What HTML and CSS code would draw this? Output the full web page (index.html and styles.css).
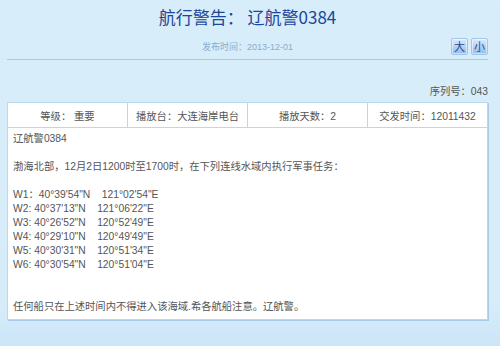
FILE: index.html
```html
<!DOCTYPE html>
<html lang="zh-CN">
<head>
    <meta charset="UTF-8">
    <title>航行警告： 辽航警0384</title>
    <link rel="stylesheet" href="styles.css">
</head>
<body>
    <div class="page">
        <h1 class="title">航行警告： 辽航警0384</h1>
        <div class="meta">
            <span class="pub-time">发布时间：2013-12-01</span>
            <div class="font-btns">
                <button class="font-btn">大</button>
                <button class="font-btn">小</button>
            </div>
        </div>
        <div class="serial">序列号：043</div>
        <table class="warn-table">
            <tr class="head-row">
                <td>等级： 重要</td>
                <td>播放台：大连海岸电台</td>
                <td>播放天数：2</td>
                <td>交发时间：12011432</td>
            </tr>
            <tr>
                <td colspan="4" class="content">辽航警0384<br>
<br>
渤海北部，12月2日1200时至1700时，在下列连线水域内执行军事任务：<br>
<br>
W1：40°39'54"N&nbsp;&nbsp;&nbsp;&nbsp;121°02'54"E<br>
W2: 40°37'13"N&nbsp;&nbsp;&nbsp;&nbsp;121°06'22"E<br>
W3: 40°26'52"N&nbsp;&nbsp;&nbsp;&nbsp;120°52'49"E<br>
W4: 40°29'10"N&nbsp;&nbsp;&nbsp;&nbsp;120°49'49"E<br>
W5: 40°30'31"N&nbsp;&nbsp;&nbsp;&nbsp;120°51'34"E<br>
W6: 40°30'54"N&nbsp;&nbsp;&nbsp;&nbsp;120°51'04"E<br>
<br>
<br>
任何船只在上述时间内不得进入该海域.希各航船注意。辽航警。</td>
            </tr>
        </table>
    </div>
</body>
</html>
```

FILE: styles.css
```css
* {
    margin: 0;
    padding: 0;
    box-sizing: border-box;
}

body {
    background: linear-gradient(#d7edfa 0%, #d6ecf9 88%, #cce5f8 100%);
    min-height: 346px;
    font-family: "Liberation Sans", "Noto Sans CJK SC", sans-serif;
    color: #555;
}

.page {
    width: 481px;
    margin-left: 7px;
}

.title {
    margin-top: 5px;
    height: 24px;
    line-height: 24px;
    text-align: center;
    font-family: "Noto Sans CJK SC", sans-serif;
    font-size: 17px;
    font-weight: normal;
    color: #1b4699;
}

.meta {
    margin-top: 8px;
    height: 18px;
    display: grid;
    grid-template-columns: 1fr auto 1fr;
    align-items: center;
    border-bottom: 1px solid #a8cae9;
    box-sizing: content-box;
    padding-bottom: 4px;
}

.pub-time {
    grid-column: 2;
    font-size: 9px;
    color: #89acce;
}

.font-btns {
    grid-column: 3;
    justify-self: end;
    display: flex;
    gap: 3px;
}

.font-btn {
    width: 17px;
    height: 17px;
    border: 1px solid #a3c5e8;
    border-radius: 2px;
    background: linear-gradient(#dbeafa 0%, #b7d4f2 50%, #93bdea 100%);
    box-shadow: inset 0 0 0 1px rgba(255, 255, 255, 0.5);
    color: #1f4c92;
    font-family: "Noto Sans CJK SC", sans-serif;
    font-size: 11px;
    line-height: 15px;
    text-align: center;
}

.serial {
    margin-top: 25px;
    height: 14px;
    line-height: 14px;
    text-align: right;
    font-size: 10.3px;
}

.warn-table {
    margin-top: 3px;
    width: 481px;
    table-layout: fixed;
    border-collapse: collapse;
    background: #fff;
    box-shadow: 1px 1px 0 #a9cbea;
    font-size: 10.3px;
}

.warn-table td {
    border: 1px solid #bad8f1;
}

.head-row td {
    height: 25px;
    text-align: center;
    white-space: nowrap;
}

.content {
    padding: 4px 5px 5px;
    line-height: 14px;
    text-align: left;
}
```
